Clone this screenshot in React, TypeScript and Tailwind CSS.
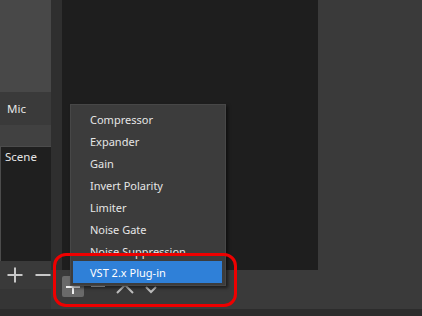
import React from "react";

const items = [
  "Compressor",
  "Expander",
  "Gain",
  "Invert Polarity",
  "Limiter",
  "Noise Gate",
  "Noise Suppression",
];

export default function App() {
  return (
    <div
      className="relative w-[422px] h-[316px] overflow-hidden bg-[#3a3a3a] flex flex-col text-[11px] text-[#e6e6e6]"
      style={{ fontFamily: '"Noto Sans", "Liberation Sans", sans-serif' }}
    >
      <div className="flex h-[309px]">
        {/* left column */}
        <div className="w-[51px] flex flex-col">
          <div className="h-[92px] bg-[#484848]" />
          <div className="h-[33px] bg-[#3a3a3a] flex items-center pl-[7px] leading-none text-[11.5px]">Mic</div>
          <div className="h-[21px] bg-[#414141]" />
          <div className="h-[115px] bg-[#1f1f1f] border-l border-t border-[#4c4c4c] pl-[4px] pt-[3px] leading-[14px] text-[11.5px]">
            Scene
          </div>
          <div className="h-[28px] bg-[#3a3a3a] flex items-center pl-[7px] gap-[12px]">
            <svg width="16" height="16" viewBox="0 0 16 16">
              <path d="M8 0.5V15.5M0.5 8H15.5" stroke="#c8c8c8" strokeWidth="2" />
            </svg>
            <svg width="16" height="16" viewBox="0 0 16 16">
              <path d="M0.5 8H15.5" stroke="#c8c8c8" strokeWidth="2" />
            </svg>
          </div>
          <div className="flex-1 bg-[#353535]" />
        </div>
        {/* middle column */}
        <div className="w-[267px] flex flex-col">
          <div className="h-[270px] flex">
            <div className="w-[11px] bg-[#2f2f2f]" />
            <div className="flex-1 bg-[#1e1e1e]" />
          </div>
          <div className="flex-1 bg-[#3a3a3a] flex items-start pl-[11px] pt-[6px]">
            <div className="w-[22px] h-[21px] bg-[#6a6a6a] rounded-[2px] flex items-center justify-center">
              <svg width="16" height="16" viewBox="0 0 16 16">
                <path d="M8 1V15M1 8H15" stroke="#f0f0f0" strokeWidth="2" />
              </svg>
            </div>
            <svg width="14" height="2" viewBox="0 0 14 2" className="ml-[7px] mt-[9px]">
              <path d="M0 1H14" stroke="#bdbdbd" strokeWidth="2" />
            </svg>
            <svg width="18" height="11" viewBox="0 0 18 11" className="ml-[11px] mt-[7px]">
              <path d="M1 10L9 2L17 10" stroke="#bdbdbd" strokeWidth="2" fill="none" />
            </svg>
            <svg width="12" height="9" viewBox="0 0 12 9" className="ml-[11px] mt-[9px]">
              <path d="M1 2L6 7L11 2" stroke="#bdbdbd" strokeWidth="2" fill="none" />
            </svg>
          </div>
        </div>
        {/* right column */}
        <div className="flex-1 bg-[#3a3a3a]" />
      </div>
      <div className="flex-1 bg-[#2c2c2c]" />

      {/* context menu */}
      <div className="absolute left-[70px] top-[104px] w-[156px] bg-[#3c3c3c] border border-[#474747] px-[2px] pt-[2px] pb-[2px] shadow-[2px_2px_3px_rgba(0,0,0,0.5)]">
        {items.map((t) => (
          <div key={t} className="h-[22px] flex items-center pl-[17px] pt-[2px] leading-none">
            {t}
          </div>
        ))}
        <div className="h-[22px] flex items-center pl-[17px] pt-[1px] leading-none bg-[#2f80d8] text-white mr-[1px]">
          VST 2.x Plug-in
        </div>
      </div>

      {/* red annotation */}
      <div className="absolute left-[53px] top-[253px] w-[184px] h-[54px] border-[3px] border-[#ee0000] rounded-[13px]" />
    </div>
  );
}
